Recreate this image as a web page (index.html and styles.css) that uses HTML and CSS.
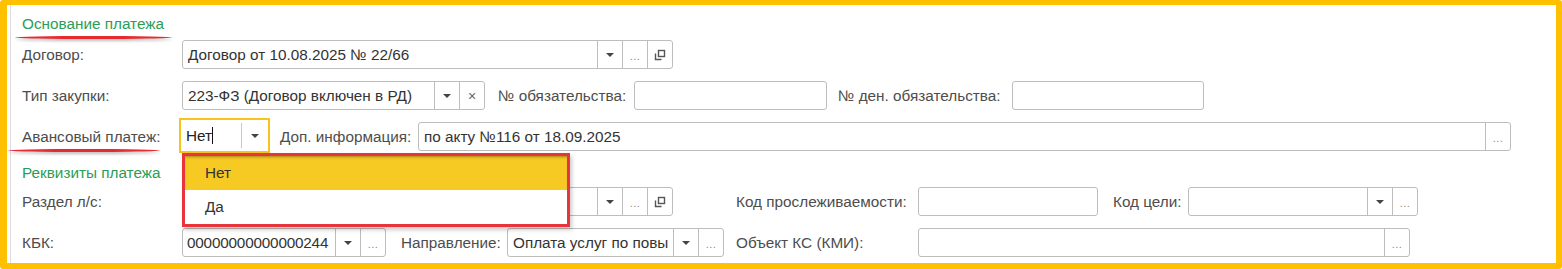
FILE: index.html
```html
<!DOCTYPE html>
<html>
<head>
    <title>Основание платежа</title>
    <link rel="stylesheet" href="styles.css">
</head>
<body>
    <div class="frame">
        <div class="sheet">
            <div class="group-title"><span class="mark mark-title">Основание платежа</span></div>

            <div class="row">
                <span class="lbl">Договор:</span>
                <div class="field f-contract">
                    <span class="val">Договор от 10.08.2025 № 22/66</span>
                    <span class="btn"><i class="tri"></i></span>
                    <span class="btn dots">...</span>
                    <span class="btn"><svg width="12" height="12" viewBox="0 0 12 12"><rect x="4.5" y="1.5" width="6" height="6" fill="none" stroke="#555" stroke-width="1.4"/><path d="M1.5 4.5V10.5H7.5" fill="none" stroke="#555" stroke-width="1.4"/></svg></span>
                </div>
            </div>

            <div class="row">
                <span class="lbl">Тип закупки:</span>
                <div class="field f-type">
                    <span class="val">223-ФЗ (Договор включен в РД)</span>
                    <span class="btn"><i class="tri"></i></span>
                    <span class="btn cross">×</span>
                </div>
                <span class="lbl l-oblig">№ обязательства:</span>
                <div class="field f-oblig"><span class="val"></span></div>
                <span class="lbl l-money">№ ден. обязательства:</span>
                <div class="field f-money"><span class="val"></span></div>
            </div>

            <div class="row">
                <span class="lbl l-advance"><span class="mark mark-label">Авансовый платеж:</span></span>
                <div class="focus">
                    <span class="val">Нет<i class="caret"></i></span>
                    <span class="focus-btn"><i class="tri"></i></span>
                    <div class="popup">
                        <div class="item active">Нет</div>
                        <div class="item">Да</div>
                    </div>
                </div>
                <span class="lbl l-info">Доп. информация:</span>
                <div class="field f-info">
                    <span class="val">по акту №116 от 18.09.2025</span>
                    <span class="btn dots">...</span>
                </div>
            </div>

            <div class="group-title second">Реквизиты платежа</div>

            <div class="row">
                <span class="lbl">Раздел л/с:</span>
                <div class="field f-contract">
                    <span class="val"></span>
                    <span class="btn"><i class="tri"></i></span>
                    <span class="btn dots">...</span>
                    <span class="btn"><svg width="12" height="12" viewBox="0 0 12 12"><rect x="4.5" y="1.5" width="6" height="6" fill="none" stroke="#555" stroke-width="1.4"/><path d="M1.5 4.5V10.5H7.5" fill="none" stroke="#555" stroke-width="1.4"/></svg></span>
                </div>
                <span class="lbl l-trace">Код прослеживаемости:</span>
                <div class="field f-trace"><span class="val"></span></div>
                <span class="lbl l-goal">Код цели:</span>
                <div class="field f-goal">
                    <span class="val"></span>
                    <span class="btn"><i class="tri"></i></span>
                    <span class="btn dots">...</span>
                </div>
            </div>

            <div class="row">
                <span class="lbl">КБК:</span>
                <div class="field f-kbk">
                    <span class="val">00000000000000244</span>
                    <span class="btn"><i class="tri"></i></span>
                    <span class="btn dots">...</span>
                </div>
                <span class="lbl l-dir">Направление:</span>
                <div class="field f-dir">
                    <span class="val">Оплата услуг по повы</span>
                    <span class="btn"><i class="tri"></i></span>
                    <span class="btn dots">...</span>
                </div>
                <span class="lbl l-object">Объект КС (КМИ):</span>
                <div class="field f-object">
                    <span class="val"></span>
                    <span class="btn dots">...</span>
                </div>
            </div>
        </div>
    </div>
</body>
</html>
```

FILE: styles.css
```css
body {
    margin: 0;
    font-family: "Liberation Sans", Arial, sans-serif;
    font-size: 15.3px;
    color: #4d4d4d;
    background: #fff;
}

.frame {
    width: 1562px;
    height: 269px;
    box-sizing: border-box;
    border-style: solid;
    border-color: #ffc000;
    border-width: 5px 6px 6px 7px;
    border-radius: 3px;
    display: flex;
}

.sheet {
    flex: 1;
    margin-left: 3px;
    border-left: 1px solid #dcdcdc;
    padding: 9px 0 0 11px;
}

.group-title {
    color: #2a9d55;
    line-height: 20px;
    height: 20px;
    margin-bottom: 6px;
}

.group-title.second {
    margin-top: 11px;
    margin-bottom: 4px;
}

.mark {
    position: relative;
}

.mark::after {
    content: "";
    position: absolute;
    height: 3px;
    background: #e62a2f;
    border-radius: 50%;
    box-shadow: 0 2px 3px rgba(0, 0, 0, 0.28);
}

.mark-title::after {
    left: -7px;
    right: -8px;
    bottom: -7px;
}

.mark-label::after {
    left: -14px;
    right: 0;
    bottom: -7px;
}

.row {
    display: flex;
    align-items: center;
    height: 29px;
    margin-bottom: 12px;
}

.lbl {
    flex: none;
    width: 160px;
    white-space: nowrap;
}

.field {
    flex: none;
    display: flex;
    height: 29px;
    box-sizing: border-box;
    border: 1px solid #bdbdbd;
    border-radius: 3px;
    color: #333;
    background: #fff;
}

.val {
    flex: 1;
    min-width: 0;
    padding: 0 4px 0 5px;
    line-height: 27px;
    white-space: nowrap;
    overflow: hidden;
}

.btn {
    flex: none;
    width: 24px;
    border-left: 1px solid #bdbdbd;
    display: flex;
    align-items: center;
    justify-content: center;
    color: #888;
}

.dots {
    font-size: 11px;
    letter-spacing: 0.5px;
    padding-top: 2px;
}

.cross {
    font-size: 14px;
    color: #666;
}

.tri {
    width: 0;
    height: 0;
    border-left: 4px solid transparent;
    border-right: 4px solid transparent;
    border-top: 4px solid #444;
}

/* widths of the inputs and the inline labels */
.f-contract { width: 491px; }
.f-type { width: 303px; }
.l-oblig { width: 136px; margin-left: 13px; }
.f-oblig { width: 193px; }
.l-money { width: 174px; margin-left: 11px; }
.f-money { width: 192px; }

.l-advance { width: 157px; }
.l-info { width: 138px; margin-left: 10px; }
.f-info { width: 1093px; }

.l-trace { width: 182px; margin-left: 63px; }
.f-trace { width: 180px; }
.l-goal { width: 75px; margin-left: 15px; }
.f-goal { width: 230px; }

.f-kbk { width: 204px; }
.f-kbk .val { padding-left: 4px; letter-spacing: -0.2px; }
.l-dir { width: 106px; margin-left: 15px; }
.f-dir { width: 217px; }
.l-object { width: 182px; margin-left: 12px; }
.f-object { width: 492px; }

/* focused field with open list */
.focus {
    position: relative;
    flex: none;
    display: flex;
    width: 91px;
    height: 35px;
    box-sizing: border-box;
    border: 2px solid #f9c31c;
    color: #222;
    margin-top: -2px;
}

.focus .val {
    padding-left: 5px;
    line-height: 31px;
    overflow: visible;
}

.caret {
    display: inline-block;
    width: 1px;
    height: 17px;
    background: #111;
    vertical-align: -3px;
}

.focus-btn {
    flex: none;
    width: 26px;
    margin: 3px 0;
    border-left: 1px solid #c8c8c8;
    display: flex;
    align-items: center;
    justify-content: center;
}

.popup {
    position: absolute;
    left: 1px;
    top: 33px;
    width: 388px;
    box-sizing: border-box;
    border: 3px solid #e8353b;
    background: #fff;
    box-shadow: 2px 3px 4px rgba(0, 0, 0, 0.2);
    z-index: 2;
    color: #333;
}

.item {
    height: 34px;
    line-height: 34px;
    padding-left: 20px;
}

.item.active {
    background: #f7c923;
    box-shadow: inset 0 3px 3px -2px rgba(0, 0, 0, 0.35);
}
```
